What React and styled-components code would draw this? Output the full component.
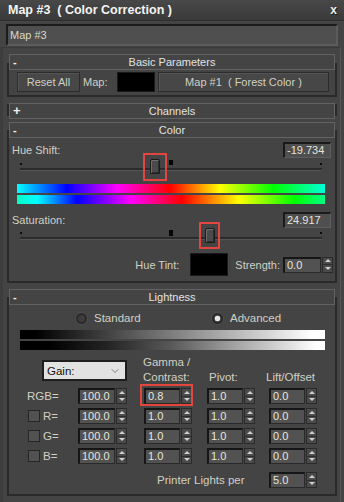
import React from 'react';
import styled, { createGlobalStyle } from 'styled-components';
import { ChevronDown } from 'lucide-react';

const GlobalStyle = createGlobalStyle`
  html, body {
    margin: 0;
    padding: 0;
    background: #444444;
  }
  body {
    font-family: "Liberation Sans", Arial, sans-serif;
    font-size: 11px;
    color: #d0d0c4;
  }
  * {
    box-sizing: border-box;
  }
`

const Window = styled.div`
    width: 344px;
    height: 502px;
    background: #444444;
    display: flex;
    flex-direction: column;
    overflow: hidden;
`

const TitleBar = styled.div`
    height: 21px;
    flex: none;
    display: flex;
    align-items: center;
    justify-content: space-between;
    padding: 0 7px 0 8px;
    background: linear-gradient(#484848, #3a3a3a);
    border-bottom: 1px solid #2f2f2f;
`

const Title = styled.span`
    font-weight: bold;
    font-size: 12.5px;
    color: #f4f4f4;
    white-space: pre;
`

const Close = styled.span`
    font-weight: bold;
    font-size: 12px;
    color: #ececec;
    text-shadow: 1px 1px 0 #1a1a1a;
`

const NameField = styled.div`
    flex: none;
    margin: 3px 6px 0 6px;
    height: 22px;
    background: #4f4f4f;
    border: 2px solid;
    border-color: #1c1c1c #5c5c5c #5c5c5c #1c1c1c;
    padding: 2px 2px;
    color: #d8d8c8;
    line-height: 15px;
`

const Panel = styled.div`
    flex: 1;
    margin: 1px 3px 0 0;
    border-top: 1px solid #3a3a3a;
    border-left: 3px solid #3d3d3d;
    border-right: 1px solid #575757;
    padding: 6px 3px 0 4px;
    display: flex;
    flex-direction: column;
`

const Rollout = styled.section`
    display: flex;
    flex-direction: column;
    margin-bottom: 6px;
`

const RollHeader = styled.div`
    position: relative;
    z-index: 1;
    height: 16px;
    margin: 0 2px;
    border: 1px solid #626262;
    background: #444444;
    display: grid;
    grid-template-columns: 14px 1fr 14px;
    align-items: center;
    color: #e2e2e2;
    line-height: 14px;
`

const Toggle = styled.span`
    padding-left: 3px;
    font-weight: bold;
    font-size: ${({ $big }) => ($big ? '13px' : '11px')};
    color: #f0f0f0;
`

const RollTitle = styled.span`
    text-align: center;
`

const Frame = styled.div`
    margin-top: ${({ $overlap }) => -$overlap}px;
    border: 2px solid #2a2a2a;
    height: ${({ $h }) => ($h ? `${$h}px` : 'auto')};
    padding: ${({ $pad }) => $pad || '0'};
    display: flex;
    flex-direction: column;
`

const Row = styled.div`
    display: flex;
    align-items: center;
    height: ${({ $h }) => $h}px;
    margin-top: ${({ $mt }) => $mt || 0}px;
    padding: ${({ $pad }) => $pad || '0'};
    justify-content: ${({ $justify }) => $justify || 'flex-start'};
`

const Button = styled.div`
    height: 20px;
    width: ${({ $w }) => ($w ? `${$w}px` : 'auto')};
    flex: ${({ $w }) => ($w ? 'none' : '1')};
    margin-left: ${({ $ml }) => $ml || 0}px;
    border: 1px solid #2c2c2c;
    background: #474747;
    box-shadow: inset 1px 1px 0 #555555;
    display: flex;
    align-items: center;
    justify-content: center;
    color: #d0d0c4;
    white-space: pre;
`

const Label = styled.span`
    color: #d0d0c4;
    white-space: pre;
    width: ${({ $w }) => ($w ? `${$w}px` : 'auto')};
    margin: ${({ $m }) => $m || '0'};
    flex: none;
`

const Swatch = styled.div`
    width: 38px;
    height: ${({ $h }) => $h}px;
    background: #000000;
    border: 1px solid #1a1a1a;
    flex: none;
`

const ValueBox = styled.div`
    width: 48px;
    height: 16px;
    margin-left: auto;
    background: #4f4f4f;
    border: 1px solid;
    border-top: 2px solid #1a1a1a;
    border-left: 2px solid #1a1a1a;
    border-color: #1a1a1a #5e5e5e #5e5e5e #1a1a1a;
    padding-left: 2px;
    line-height: 12px;
    color: #e4e4da;
`

const Slider = styled.div`
    position: relative;
    height: 15px;
    margin: ${({ $mt }) => $mt || 0}px 13px 0 11px;
`

const Track = styled.div`
    margin-top: 9px;
    height: 3px;
    background: #2b2b2b;
    border-bottom: 1px solid #555555;
`

const Tick = styled.div`
    position: absolute;
    top: 4px;
    ${({ $side }) => $side}: 0;
    width: 2px;
    height: 2px;
    background: #0c0c0c;
`

const Marker = styled.div`
    position: absolute;
    left: 149px;
    top: ${({ $top }) => $top}px;
    width: 4px;
    height: ${({ $h }) => $h}px;
    background: #050505;
`

const Thumb = styled.div`
    position: absolute;
    top: 0;
    width: 10px;
    height: 15px;
    border: 1px solid #1c1c1c;
    border-radius: 2px 2px 0 0;
    background: #4a4a4a;
    box-shadow: inset 1px 1px 0 #6e6e6e, inset -1px -1px 0 #2e2e2e;
`

const Highlight = styled.div`
    position: absolute;
    top: ${({ $top }) => ($top === undefined ? -6 : $top)}px;
    height: ${({ $h }) => $h}px;
    width: ${({ $w }) => $w}px;
    border: 2px solid #e2463e;
    pointer-events: none;
`

const Marked = styled.div`
    position: relative;
`

const SpectrumBar = styled.div`
    height: 9px;
    margin: ${({ $mt }) => $mt}px 10px 0 ${({ $ml }) => $ml || 8}px;
    background: ${({ $grad }) => $grad};
`

const Spin = styled.div`
    display: flex;
    align-items: stretch;
    gap: 1px;
    height: 16px;
    flex: none;
`

const SpinField = styled.div`
    width: ${({ $w }) => $w}px;
    background: #525252;
    border: 1px solid #2a2a2a;
    border-top: 2px solid #161616;
    border-left: 2px solid #161616;
    padding-left: 2px;
    line-height: 12px;
    color: #e6e6dc;
`

const SpinArrows = styled.div`
    width: 11px;
    display: flex;
    flex-direction: column;
    border: 1px solid #2a2a2a;
    background: #4a4a4a;
`

const ArrowCell = styled.div`
    flex: 1;
    display: flex;
    align-items: center;
    justify-content: center;
    & + & {
        border-top: 1px solid #2e2e2e;
    }
    &::after {
        content: '';
        border-left: 3px solid transparent;
        border-right: 3px solid transparent;
        ${({ $up }) => ($up ? 'border-bottom' : 'border-top')}: 3px solid #cfcfcf;
    }
`

const Spinner = ({ value, w = 37 }) => (
    <Spin>
        <SpinField $w={w}>{value}</SpinField>
        <SpinArrows>
            <ArrowCell $up />
            <ArrowCell />
        </SpinArrows>
    </Spin>
)

const RadioRow = styled.div`
    display: grid;
    grid-template-columns: 136px 1fr;
    height: 14px;
    margin-top: 12px;
    padding-left: 67px;
    align-items: center;
`

const RadioOption = styled.div`
    display: flex;
    align-items: center;
    gap: 7px;
    font-size: 11.5px;
`

const RadioDot = styled.span`
    width: 11px;
    height: 11px;
    border-radius: 50%;
    border: 2px solid #2a2a2a;
    background: ${({ $on }) => ($on ? 'radial-gradient(circle, #e4e4e4 0 2.6px, #3a3a3a 3.2px)' : '#3d3d3d')};
    box-shadow: 0 0 0 1px #4e4e4e;
    flex: none;
`

const Table = styled.div`
    display: grid;
    grid-template-columns: 69px 66px 63px 62px 66px;
    grid-template-rows: 29px repeat(4, 16px) 20px;
    row-gap: 4px;
    margin-top: 5px;
    align-items: center;
`

const GainSelect = styled.div`
    grid-column: 1 / 3;
    align-self: start;
    margin: 5px 0 0 33px;
    width: 85px;
    height: 21px;
    background: #e2e2e2;
    border: 2px solid #1e1e1e;
    display: flex;
    align-items: center;
    justify-content: space-between;
    padding: 0 4px 0 3px;
    color: #111111;
    font-size: 11.5px;
`

const ColHead = styled.div`
    align-self: start;
    line-height: 15px;
    padding-top: ${({ $pt }) => $pt || 0}px;
    margin-left: ${({ $ml }) => $ml || 0}px;
    white-space: pre;
    font-size: 11.5px;
`

const RowLabel = styled.div`
    display: flex;
    align-items: center;
    gap: 3px;
    padding-left: 18px;
    font-size: 11.5px;
`

const Check = styled.span`
    width: 12px;
    height: 12px;
    margin-left: 1px;
    background: #525252;
    border: 1px solid #262626;
    flex: none;
`

const PrinterLabel = styled.div`
    grid-column: 3 / 5;
    padding-left: 13px;
    margin-top: 4px;
    font-size: 11.5px;
`

const PrinterSpin = styled.div`
    grid-column: 5;
    margin-top: 4px;
`

const hueBarA = 'linear-gradient(90deg, #00ffff 0%, #0000ff 16.2%, #ff00ff 32.5%, #ff0000 49.7%, #ffff00 65.9%, #00ff00 83.1%, #00ffd8 100%)'
const hueBarB = 'linear-gradient(90deg, #00ffc4 0%, #00ffff 6.5%, #0000ff 19.5%, #ff00ff 37%, #ff0000 53.5%, #ffff00 72%, #00ff00 90%, #00ff88 100%)'
const grayA = 'linear-gradient(90deg, #000 0%, #000 5%, #fff 96%, #fff 100%)'
const grayB = 'linear-gradient(90deg, #000 0%, #000 9%, #222 28%, #5a5a5a 50%, #a8a8a8 72%, #e4e4e4 90%, #fff 97%, #fff 100%)'

const rows = [
    { label: 'RGB=', check: false, values: ['100.0', '0.8', '1.0', '0.0'] },
    { label: 'R=', check: true, values: ['100.0', '1.0', '1.0', '0.0'] },
    { label: 'G=', check: true, values: ['100.0', '1.0', '1.0', '0.0'] },
    { label: 'B=', check: true, values: ['100.0', '1.0', '1.0', '0.0'] },
]

const App = () => {
    return (
        <Window>
            <GlobalStyle />
            <TitleBar>
                <Title>Map #3  ( Color Correction )</Title>
                <Close>x</Close>
            </TitleBar>
            <NameField>Map #3</NameField>
            <Panel>
                <Rollout>
                    <RollHeader>
                        <Toggle>-</Toggle>
                        <RollTitle>Basic Parameters</RollTitle>
                    </RollHeader>
                    <Frame $overlap={7} $pad="7px 6px 3px 8px">
                        <Row $h={20}>
                            <Button $w={63}>Reset All</Button>
                            <Label $w={34} $m="0 0 0 3px">Map:</Label>
                            <Swatch $h={20} />
                            <Button $ml={3}>Map #1  ( Forest Color )</Button>
                        </Row>
                    </Frame>
                </Rollout>

                <Rollout>
                    <RollHeader>
                        <Toggle $big>+</Toggle>
                        <RollTitle>Channels</RollTitle>
                    </RollHeader>
                    <Frame $overlap={15} $h={12} />
                </Rollout>

                <Rollout>
                    <RollHeader>
                        <Toggle>-</Toggle>
                        <RollTitle>Color</RollTitle>
                    </RollHeader>
                    <Frame $overlap={8} $pad="10px 0 5px 0">
                        <Row $h={16} $pad="0 4px 0 3px">
                            <Label>Hue Shift:</Label>
                            <ValueBox>-19.734</ValueBox>
                        </Row>
                        <Slider $mt={1}>
                            <Track />
                            <Tick $side="left" />
                            <Tick $side="right" />
                            <Marker $top={1} $h={5} />
                            <Thumb style={{ left: 130 }} />
                            <Highlight style={{ left: 123 }} $w={24} $h={28} />
                        </Slider>
                        <SpectrumBar $mt={10} $grad={hueBarA} />
                        <SpectrumBar $mt={2} $grad={hueBarB} />
                        <Row $h={16} $mt={8} $pad="0 4px 0 3px">
                            <Label>Saturation:</Label>
                            <ValueBox>24.917</ValueBox>
                        </Row>
                        <Slider>
                            <Track />
                            <Tick $side="left" />
                            <Tick $side="right" />
                            <Marker $top={2} $h={6} />
                            <Thumb style={{ left: 185 }} />
                            <Highlight style={{ left: 179 }} $w={21} $h={27} />
                        </Slider>
                        <Row $h={23} $mt={10} $pad="0 2px 0 0" $justify="flex-end">
                            <Label $m="0 11px 0 0">Hue Tint:</Label>
                            <Swatch $h={23} />
                            <Label $m="0 3px 0 7px">Strength:</Label>
                            <Spinner value="0.0" w={38} />
                        </Row>
                    </Frame>
                </Rollout>

                <Rollout>
                    <RollHeader>
                        <Toggle>-</Toggle>
                        <RollTitle>Lightness</RollTitle>
                    </RollHeader>
                    <Frame $overlap={8} $pad="0 0 6px 0">
                        <RadioRow>
                            <RadioOption>
                                <RadioDot />
                                Standard
                            </RadioOption>
                            <RadioOption>
                                <RadioDot $on />
                                Advanced
                            </RadioOption>
                        </RadioRow>
                        <SpectrumBar $mt={5} $ml={11} $grad={grayA} />
                        <SpectrumBar $mt={2} $ml={11} $grad={grayB} />
                        <Table>
                            <GainSelect>
                                Gain:
                                <ChevronDown size={12} strokeWidth={1.3} color="#444" />
                            </GainSelect>
                            <ColHead $ml={-1}>{'Gamma /\nContrast:'}</ColHead>
                            <ColHead $pt={15} $ml={2}>Pivot:</ColHead>
                            <ColHead $pt={15} $ml={-3}>Lift/Offset</ColHead>
                            {rows.map((r, ri) => (
                                <React.Fragment key={r.label}>
                                    <RowLabel>
                                        {r.check && <Check />}
                                        {r.label}
                                    </RowLabel>
                                    {r.values.map((v, i) =>
                                        ri === 0 && i === 1 ? (
                                            <Marked key={i}>
                                                <Spinner value={v} w={36} />
                                                <Highlight style={{ left: -4 }} $top={-4} $w={53} $h={22} />
                                            </Marked>
                                        ) : (
                                            <Spinner key={i} value={v} w={i === 0 ? 37 : 36} />
                                        )
                                    )}
                                </React.Fragment>
                            ))}
                            <PrinterLabel>Printer Lights per</PrinterLabel>
                            <PrinterSpin>
                                <Spinner value="5.0" w={36} />
                            </PrinterSpin>
                        </Table>
                    </Frame>
                </Rollout>
            </Panel>
        </Window>
    )
}

export default App
